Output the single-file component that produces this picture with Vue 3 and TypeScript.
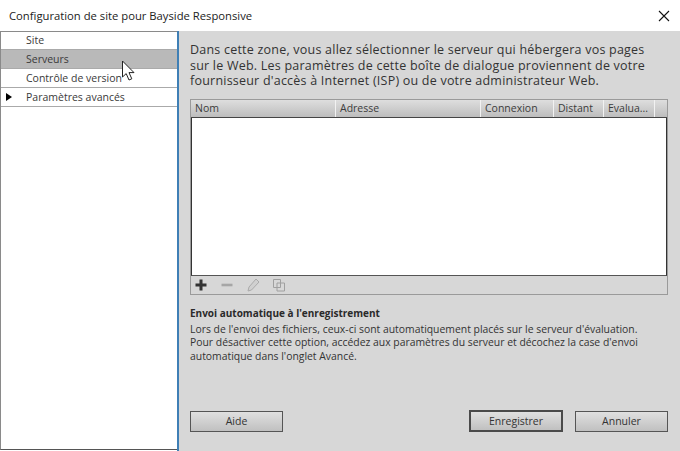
<script setup lang="ts">
interface SideItem {
  label: string;
  selected?: boolean;
  arrow?: boolean;
}

interface Column {
  label: string;
  width: number;
}

const items: SideItem[] = [
  { label: 'Site' },
  { label: 'Serveurs', selected: true },
  { label: 'Contrôle de version' },
  { label: 'Paramètres avancés', arrow: true },
];

const columns: Column[] = [
  { label: 'Nom', width: 145 },
  { label: 'Adresse', width: 145 },
  { label: 'Connexion', width: 73 },
  { label: 'Distant', width: 50 },
  { label: 'Evalua...', width: 51 },
];
</script>

<template>
  <div class="dialog">
    <header class="titlebar">
      <span class="title">Configuration de site pour Bayside Responsive</span>
      <svg class="close" width="12" height="12" viewBox="0 0 12 12">
        <path d="M1 1L11 11M11 1L1 11" stroke="#111" stroke-width="1.1" fill="none" />
      </svg>
    </header>

    <div class="body">
      <aside class="side">
        <div
          v-for="item in items"
          :key="item.label"
          class="side-row"
          :class="{ 'side-row--selected': item.selected }"
        >
          <span v-if="item.arrow" class="arrow" />
          {{ item.label }}
        </div>
        <svg class="cursor" width="16" height="22" viewBox="0 0 16 22">
          <path
            d="M1.5 1V17L5.2 13.6L8 20L10.8 18.8L8 12.6H13Z"
            fill="#fff"
            stroke="#222"
            stroke-width="1"
            stroke-linejoin="round"
          />
        </svg>
      </aside>

      <main class="panel">
        <p class="intro">
          Dans cette zone, vous allez sélectionner le serveur qui hébergera vos pages<br />
          sur le Web. Les paramètres de cette boîte de dialogue proviennent de votre<br />
          fournisseur d'accès à Internet (ISP) ou de votre administrateur Web.
        </p>

        <section class="table">
          <div class="thead">
            <div
              v-for="col in columns"
              :key="col.label"
              class="th"
              :style="{ width: col.width + 'px' }"
            >
              {{ col.label }}
            </div>
          </div>
          <div class="tbody" />
          <div class="tools">
            <svg width="14" height="14" viewBox="0 0 14 14">
              <path d="M7 1.5V12.5M1.5 7H12.5" stroke="#333" stroke-width="3" fill="none" />
            </svg>
            <svg width="14" height="14" viewBox="0 0 14 14">
              <path d="M1.5 7H12.5" stroke="#a6a6a6" stroke-width="2.6" fill="none" />
            </svg>
            <svg width="14" height="14" viewBox="0 0 14 14">
              <path
                d="M10 1L13 4L5.5 12L2 13L3 9Z"
                fill="#d0d0d0"
                stroke="#aaa"
                stroke-width="1"
              />
            </svg>
            <svg width="14" height="14" viewBox="0 0 14 14">
              <path
                d="M1.5 1.5H8.5V9.5H1.5Z M5 5H12.5V13H5Z"
                fill="#d8d8d8"
                stroke="#a0a0a0"
                stroke-width="1"
              />
            </svg>
          </div>
        </section>

        <h2 class="heading">Envoi automatique à l'enregistrement</h2>
        <p class="note">
          Lors de l'envoi des fichiers, ceux-ci sont automatiquement placés sur le serveur d'évaluation.<br />
          Pour désactiver cette option, accédez aux paramètres du serveur et décochez la case d'envoi<br />
          automatique dans l'onglet Avancé.
        </p>

        <footer class="actions">
          <button class="btn">Aide</button>
          <span class="spacer" />
          <button class="btn btn--default">Enregistrer</button>
          <button class="btn">Annuler</button>
        </footer>
      </main>
    </div>
  </div>
</template>

<style>
html,
body {
  margin: 0;
  background: #fff;
}
</style>

<style scoped>
.dialog {
  width: 680px;
  height: 451px;
  display: flex;
  flex-direction: column;
  overflow: hidden;
  font-family: "Open Sans", "Noto Sans", sans-serif;
  color: #333;
  background: #fff;
}
.titlebar {
  height: 31px;
  flex: none;
  display: flex;
  align-items: center;
  justify-content: space-between;
  padding: 0 9px;
  box-sizing: border-box;
}
.title {
  font-size: 11.25px;
  color: #222;
}
.close {
  margin-right: 1px;
}
.body {
  flex: 1;
  display: flex;
  min-height: 0;
}
.side {
  position: relative;
  width: 176px;
  flex: none;
  margin-bottom: 1px;
  background: #fff;
  border-top: 1px solid #8a8a8a;
  border-left: 1px solid #8a8a8a;
  border-bottom: 1px solid #555;
}
.side-row {
  position: relative;
  height: 19px;
  padding-left: 25px;
  font-size: 10.5px;
  line-height: 18px;
  color: #3a3a3a;
  border-bottom: 1px solid #aaa;
  white-space: nowrap;
  box-sizing: border-box;
}
.side-row:first-child {
  height: 18px;
  line-height: 17px;
}
.side-row--selected {
  background: #b9b9b9;
}
.arrow {
  position: absolute;
  left: 5px;
  top: 5px;
  border-left: 6px solid #000;
  border-top: 4px solid transparent;
  border-bottom: 4px solid transparent;
}
.cursor {
  position: absolute;
  left: 120px;
  top: 28px;
}
.panel {
  flex: 1;
  min-width: 0;
  display: flex;
  flex-direction: column;
  background: #d7d7d7;
  border-left: 2px solid #3f7fb5;
  padding: 11px 12px 19px 11px;
  box-sizing: border-box;
}
.intro {
  margin: 0 0 10px;
  font-size: 12.5px;
  line-height: 15.5px;
  letter-spacing: 0.22px;
  color: #333;
  white-space: nowrap;
}
.table {
  height: 196px;
  flex: none;
  display: flex;
  flex-direction: column;
  border: 1px solid #9a9a9a;
  box-sizing: border-box;
}
.thead {
  height: 18px;
  flex: none;
  display: flex;
  background: linear-gradient(#dedede, #bdbdbd);
  border-bottom: 1px solid #444;
  box-sizing: border-box;
}
.th {
  flex: none;
  box-sizing: border-box;
  padding-left: 4px;
  font-size: 10.5px;
  line-height: 17px;
  color: #3c3c3c;
  border-right: 1px solid #f2f2f2;
  white-space: nowrap;
}
.tbody {
  flex: 1;
  background: #fff;
  border-left: 1px solid #333;
  border-right: 1px solid #333;
  border-bottom: 1px solid #555;
}
.tools {
  height: 18px;
  flex: none;
  display: flex;
  align-items: center;
  gap: 12px;
  padding-left: 3px;
  background: #d7d7d7;
}
.heading {
  margin: 11px 0 0;
  font-size: 10px;
  line-height: 15px;
  font-weight: 700;
  color: #2a2a2a;
}
.note {
  margin: 2px 0 0;
  font-size: 10.4px;
  line-height: 13.5px;
  color: #333;
  white-space: nowrap;
}
.actions {
  margin-top: auto;
  display: flex;
  align-items: center;
  gap: 12px;
}
.spacer {
  flex: 1;
}
.btn {
  width: 93px;
  height: 21px;
  padding: 0;
  box-sizing: border-box;
  font-family: inherit;
  font-size: 10.5px;
  color: #333;
  background: linear-gradient(#e0e0e0, #c0c0c0);
  border: 1px solid #555;
}
.btn--default {
  width: 94px;
  height: 22px;
  border: 2px solid #4a4a4a;
}
</style>
